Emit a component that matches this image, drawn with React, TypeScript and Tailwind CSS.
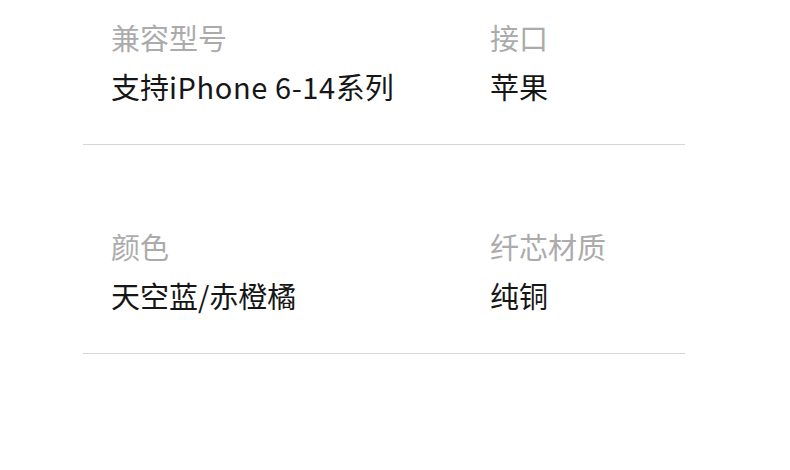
import React from "react";

type Cell = [string, React.ReactNode];

const rows: Cell[][] = [
  [
    [
      "兼容型号",
      <>
        支持<span className="tracking-[0.6px]">iPhone 6-14</span>系列
      </>,
    ],
    ["接口", "苹果"],
  ],
  [
    ["颜色", "天空蓝/赤橙橘"],
    ["纤芯材质", "纯铜"],
  ],
];

export default function App() {
  return (
    <div
      className="w-[790px] h-[470px] bg-white pt-[17px] overflow-hidden"
      style={{ fontFamily: '"Noto Sans CJK SC", "Noto Sans", sans-serif' }}
    >
      <div className="ml-[83px] w-[602px] flex flex-col gap-[81px]">
        {rows.map((row, i) => (
          <div
            key={i}
            className="grid grid-cols-[379px_1fr] pl-[28px] pb-[38px] border-b border-[#d6d6d6]"
          >
            {row.map(([label, value]) => (
              <div key={label} className="flex flex-col gap-[9px]">
                <div className="text-[29px] leading-[40px] text-[#ababab]">{label}</div>
                <div className="text-[29px] leading-[40px] text-[#161616]">{value}</div>
              </div>
            ))}
          </div>
        ))}
      </div>
    </div>
  );
}
